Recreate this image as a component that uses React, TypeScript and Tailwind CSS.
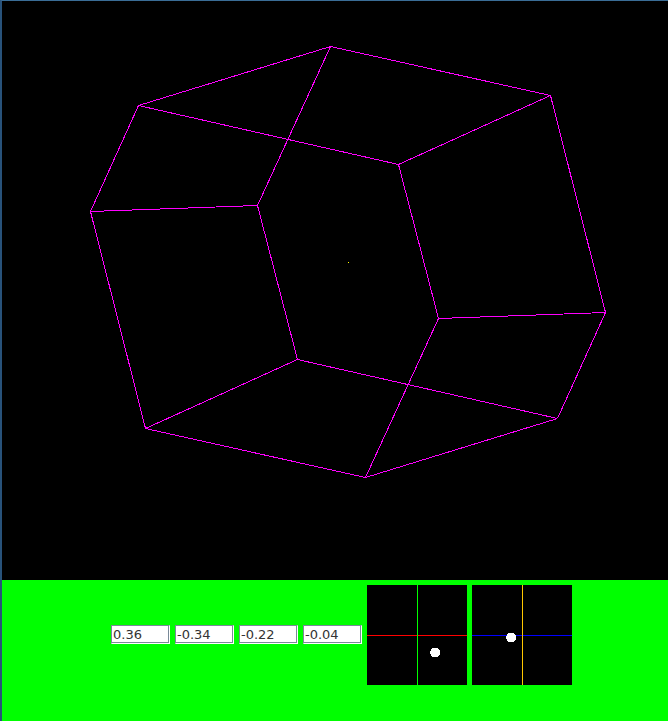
const vertices: [number, number][] = [
  [330, 46], [138, 105], [90, 211], [257, 205], [398, 164], [550, 95],
  [605, 312], [438, 318], [557, 418], [365, 477], [145, 428], [297, 359],
];

const edges: [number, number][] = [
  [0, 1], [0, 5], [0, 3], [1, 2], [1, 4], [2, 3], [4, 5], [4, 7], [5, 6],
  [6, 7], [6, 8], [3, 11], [2, 10], [10, 11], [10, 9], [9, 8], [9, 7], [11, 8],
];

const fields = [
  { label: "First rotation", value: "0.36" },
  { label: "Second rotation", value: "-0.34" },
  { label: "Third rotation", value: "-0.22" },
  { label: "Fourth rotation", value: "-0.04" },
];

function Wireframe() {
  return (
    <svg
      className="block h-[579px] w-full bg-black"
      shapeRendering="crispEdges"
      role="img"
      aria-label="Rotated wireframe"
    >
      <g transform="translate(-1.5 -0.5)" stroke="#ff00ff" strokeWidth="1">
        {edges.map(([a, b]) => (
          <line
            key={`${a}-${b}`}
            x1={vertices[a][0]}
            y1={vertices[a][1]}
            x2={vertices[b][0]}
            y2={vertices[b][1]}
          />
        ))}
      </g>
      <rect x="346" y="261" width="1" height="1" fill="#ffff00" />
    </svg>
  );
}

type PadProps = {
  label: string;
  horizontal: string;
  vertical: string;
  x: number;
  y: number;
};

function Pad({ label, horizontal, vertical, x, y }: PadProps) {
  return (
    <svg className="block h-[100px] w-[100px] shrink-0 bg-black" viewBox="0 0 100 100" role="img" aria-label={label}>
      <rect x="0" y="50" width="100" height="1" fill={horizontal} />
      <rect x="50" y="0" width="1" height="100" fill={vertical} />
      <circle cx={x} cy={y} r="5" fill="#ffffff" shapeRendering="crispEdges" />
    </svg>
  );
}

export default function App() {
  return (
    <main className="flex min-h-screen flex-col border-l-2 border-t border-l-[#28527a] border-t-[#3a6d96] bg-[#00ff00]">
      <Wireframe />
      <form className="flex items-center justify-center gap-[5px] pt-[5px] pl-[13px]">
        {fields.map((field) => (
          <input
            key={field.label}
            type="text"
            aria-label={field.label}
            defaultValue={field.value}
            className="mb-px h-[19px] w-[59px] shrink-0 border border-t-[#7a8a99] border-r-white border-b-white border-l-[#7a8a99] bg-white px-px font-['DejaVu_Sans',sans-serif] text-[13px] leading-4 text-[#333333] shadow-[inset_-1px_-1px_0_#7a8a99] outline-none"
          />
        ))}
        <Pad label="Red and green axes" horizontal="#ff0000" vertical="#00ff00" x={68.2} y={67.5} />
        <Pad label="Blue and orange axes" horizontal="#0000ff" vertical="#ffc800" x={39.2} y={52.5} />
      </form>
    </main>
  );
}
